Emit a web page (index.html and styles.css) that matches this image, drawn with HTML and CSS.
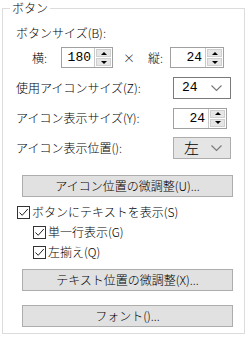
FILE: index.html
```html
<!DOCTYPE html>
<html lang="ja">
<head>
<meta charset="utf-8">
<link rel="stylesheet" href="styles.css">
</head>
<body>
<fieldset class="group">
  <legend class="caption">ボタン</legend>
  <div class="heading">ボタンサイズ(B):</div>
  <div class="size-row">
    <span class="axis">横:</span>
    <div class="spin w52">
      <div class="spin-value">180</div>
      <div class="spin-btns"><span class="up"></span><span class="down"></span></div>
    </div>
    <span class="times">×</span>
    <span class="axis2">縦:</span>
    <div class="spin w54">
      <div class="spin-value">24</div>
      <div class="spin-btns"><span class="up"></span><span class="down"></span></div>
    </div>
  </div>
  <div class="row">
    <span class="label">使用アイコンサイズ(Z):</span>
    <div class="combo white">
      <span class="combo-value num">24</span>
      <svg class="chev" width="11" height="7" viewBox="0 0 11 7"><path d="M0.5 0.5 L5.5 5.5 L10.5 0.5" fill="none" stroke="#7a7a7a" stroke-width="1.2"/></svg>
    </div>
  </div>
  <div class="row">
    <span class="label">アイコン表示サイズ(Y):</span>
    <div class="spin w54">
      <div class="spin-value">24</div>
      <div class="spin-btns"><span class="up"></span><span class="down"></span></div>
    </div>
  </div>
  <div class="row">
    <span class="label">アイコン表示位置():</span>
    <div class="combo gray">
      <span class="combo-value kanji">左</span>
      <svg class="chev" width="11" height="7" viewBox="0 0 11 7"><path d="M0.5 0.5 L5.5 5.5 L10.5 0.5" fill="none" stroke="#7a7a7a" stroke-width="1.2"/></svg>
    </div>
  </div>
  <div class="button first">アイコン位置の微調整(U)...</div>
  <label class="check lvl0"><span class="box"><svg width="11" height="11" viewBox="0 0 11 11"><path d="M1.5 5.5 L4.2 8.3 L9.8 2" fill="none" stroke="#222" stroke-width="1"/></svg></span>ボタンにテキストを表示(S)</label>
  <label class="check lvl1"><span class="box"><svg width="11" height="11" viewBox="0 0 11 11"><path d="M1.5 5.5 L4.2 8.3 L9.8 2" fill="none" stroke="#222" stroke-width="1"/></svg></span>単一行表示(G)</label>
  <label class="check lvl1"><span class="box"><svg width="11" height="11" viewBox="0 0 11 11"><path d="M1.5 5.5 L4.2 8.3 L9.8 2" fill="none" stroke="#222" stroke-width="1"/></svg></span>左揃え(Q)</label>
  <div class="button second">テキスト位置の微調整(X)...</div>
  <div class="button third">フォント()...</div>
</fieldset>
</body>
</html>
```
FILE: styles.css
```css
html, body {
  margin: 0;
  padding: 0;
  background: #ffffff;
}
body {
  width: 250px;
  height: 348px;
  font-family: "Noto Sans CJK JP", "Noto Sans", sans-serif;
  font-weight: 300;
  font-size: 12px;
  color: #000;
  line-height: 16px;
}
.group {
  margin: 0 0 0 2px;
  width: 243px;
  height: 334px;
  box-sizing: border-box;
  border: 1px solid #dcdcdc;
  padding: 0 0 0 13px;
  display: flex;
  flex-direction: column;
}
.caption {
  padding: 0 2px;
  margin-left: -6px;
  line-height: 16px;
}
.heading {
  margin-top: 9px;
  height: 16px;
}
.size-row {
  display: flex;
  align-items: center;
  margin-top: 6px;
  height: 21px;
}
.axis {
  margin-left: 16px;
  width: 29px;
}
.axis2 {
  width: 22px;
}
.times {
  margin-left: 10px;
  width: 25px;
}
.spin {
  display: flex;
  height: 21px;
  box-sizing: border-box;
  border: 1px solid #a0a0a0;
  background: #fff;
}
.w52 { width: 52px; }
.w54 { width: 54px; }
.spin-value {
  flex: 1;
  text-align: right;
  padding-right: 3px;
  font-family: "Liberation Mono", monospace;
  font-weight: 400;
  font-size: 13px;
  line-height: 19px;
}
.spin-btns {
  width: 15px;
  display: flex;
  flex-direction: column;
  border-left: 1px solid #c8c8c8;
  padding: 1px;
  gap: 1px;
  background: #fff;
}
.spin-btns span {
  flex: 1;
  background: #e6e6e6;
  border: 1px solid #cfcfcf;
  display: flex;
  align-items: center;
  justify-content: center;
}
.spin-btns .up::before {
  content: "";
  border-left: 3px solid transparent;
  border-right: 3px solid transparent;
  border-bottom: 3px solid #000;
}
.spin-btns .down::before {
  content: "";
  border-left: 3px solid transparent;
  border-right: 3px solid transparent;
  border-top: 3px solid #000;
}
.row {
  display: grid;
  grid-template-columns: 157px auto;
  align-items: center;
  height: 22px;
  margin-top: 8px;
}
.size-row + .row {
  margin-top: 9px;
}
.combo {
  width: 58px;
  height: 22px;
  box-sizing: border-box;
  display: flex;
  align-items: center;
  justify-content: space-between;
  padding: 0 8px 0 8px;
}
.combo.white {
  background: #fff;
  border: 1px solid #7a7a7a;
}
.combo.gray {
  background: #e5e5e5;
  border: 1px solid #adadad;
}
.combo-value.num {
  font-family: "Liberation Mono", monospace;
  font-weight: 400;
  font-size: 13px;
}
.combo-value.kanji {
  font-size: 15px;
  margin-left: 2px;
}
.button {
  margin-left: 6px;
  width: 211px;
  height: 22px;
  box-sizing: border-box;
  background: #e1e1e1;
  border: 1px solid #adadad;
  text-align: center;
  line-height: 20px;
}
.button.first { margin-top: 16px; }
.button.second { margin-top: 7px; }
.button.third { margin-top: 14px; }
.check {
  display: flex;
  align-items: center;
  height: 20px;
  gap: 2px;
}
.check.lvl0 { margin-top: 5px; margin-left: 1px; }
.check.lvl1 { margin-left: 17px; }
.box {
  width: 13px;
  height: 13px;
  box-sizing: border-box;
  border: 1px solid #333;
  background: #fff;
  display: flex;
  align-items: center;
  justify-content: center;
}
```
